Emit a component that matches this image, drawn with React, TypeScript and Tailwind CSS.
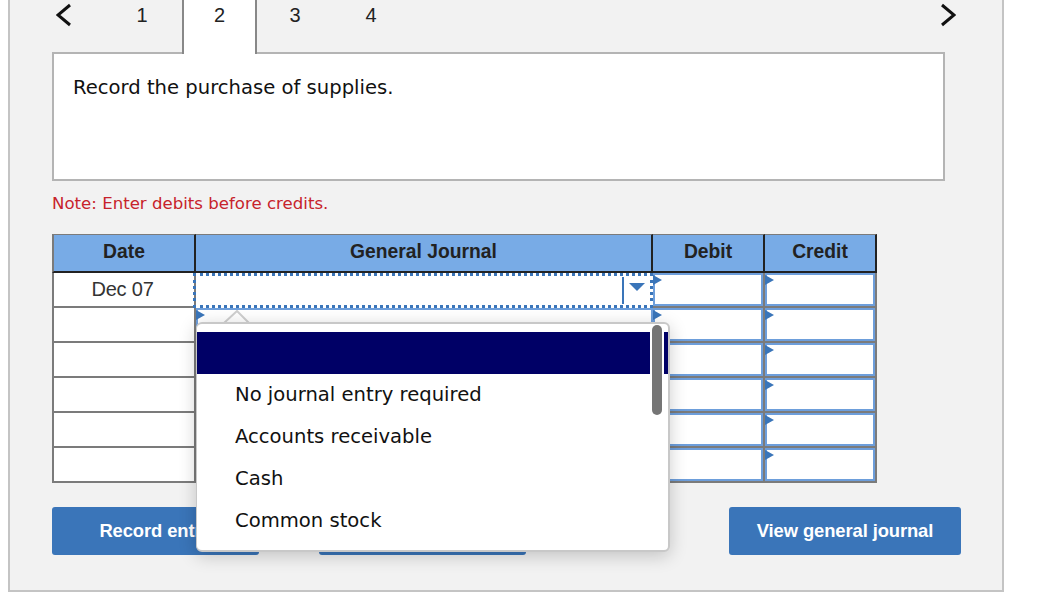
const sans = "font-['Liberation_Sans',Arial,sans-serif]";
const dv = "font-['DejaVu_Sans',Verdana,sans-serif]";

function Chevron({ right = false }: { right?: boolean }) {
  return (
    <svg width="16" height="24" viewBox="0 0 16 24" className="block">
      <polyline
        points={right ? "2,2 14,12 2,22" : "14,2 2,12 14,22"}
        fill="none"
        stroke="#111"
        strokeWidth="3"
      />
    </svg>
  );
}

function Flag() {
  return (
    <svg width="9" height="10" viewBox="0 0 9 10" className="absolute -left-[2px] top-0">
      <polygon points="0,0 9,5 0,10" fill="#3a75b9" />
    </svg>
  );
}

function MoneyCell() {
  return (
    <div className="w-[112px] border-b-2 border-r-2 border-[#7b7b7b]">
      <div className="relative h-full border-2 border-[#6d9edb] bg-white">
        <Flag />
      </div>
    </div>
  );
}

function Row({ date, active }: { date?: string; active?: boolean }) {
  return (
    <div className="flex h-[35px]">
      <div
        className={`flex w-[144px] items-center justify-center border-b-2 border-l-2 border-r-2 border-[#7b7b7b] bg-white pr-[3px] pb-[2px] text-[20px] tracking-[-0.2px] text-[#333] ${sans}`}
      >
        {date}
      </div>
      <div className="relative w-[457px] bg-white">
        {active ? (
          <div className="absolute -left-[3px] top-0 bottom-0 right-0 flex items-center justify-end border-[3px] border-dotted border-[#3a75b9]">
            <div className="mr-[26px] h-[27px] w-[2px] bg-[#3a75b9]" />
            <svg width="16" height="8" viewBox="0 0 16 8" className="absolute right-[5px] top-[7px]">
              <polygon points="0,0 16,0 8,8" fill="#3a75b9" />
            </svg>
          </div>
        ) : (
          <div className="relative h-full border-2 border-[#6d9edb]">
            <Flag />
          </div>
        )}
      </div>
      <MoneyCell />
      <MoneyCell />
    </div>
  );
}

function Th({ w, children }: { w: string; children: string }) {
  return (
    <div
      className={`flex items-center justify-center border-b-2 border-t border-r-2 border-b-[#222] border-r-[#222] border-t-[#7b7b7b] bg-[#78abe6] pb-[1px] text-[19.3px] font-bold text-[#222] ${w} ${sans}`}
    >
      {children}
    </div>
  );
}

function Btn({ w, children }: { w: string; children: string }) {
  return (
    <button className={`h-[48px] rounded-[3px] bg-[#3a75b9] text-[18.4px] font-bold tracking-[-0.1px] text-white ${w} ${sans}`}>
      {children}
    </button>
  );
}

export default function App() {
  const rows = [0, 1, 2, 3, 4, 5];
  const options = ["No journal entry required", "Accounts receivable", "Cash", "Common stock"];
  return (
    <div className="h-[601px] w-[1053px] overflow-hidden bg-white">
      <div className="ml-2 h-[592px] w-[996px] border-x-2 border-b-2 border-[#c4c4c4] bg-[#f2f2f2]">
        <div className={`flex h-[52px] items-stretch pl-[42px] pr-[46px] text-[20px] text-[#222] ${sans}`}>
          <div className="w-[52px] pl-[4px] pt-[3px]">
            <Chevron />
          </div>
          <div className="flex h-[30px] w-[78px] items-center justify-center pr-[2px]">1</div>
          <div className="relative z-10 -mb-[2px] flex w-[75px] justify-center border-x-2 border-[#888] bg-white">
            <span className="leading-[30px]">2</span>
          </div>
          <div className="flex h-[30px] w-[76px] items-center justify-center">3</div>
          <div className="flex h-[30px] w-[76px] items-center justify-center">4</div>
          <div className="ml-auto pt-[3px]">
            <Chevron right />
          </div>
        </div>

        <div className="ml-[42px] h-[129px] w-[893px] border-2 border-[#b4b4b4] bg-white pl-[19px] pt-[20px]">
          <p className={`text-[19.6px] leading-[28px] text-[#111] ${dv}`}>Record the purchase of supplies.</p>
        </div>

        <p className={`ml-[42px] mt-[12px] text-[16.6px] leading-[22px] text-[#c7232b] ${dv}`}>
          Note: Enter debits before credits.
        </p>

        <div className="relative ml-[42px] mt-[19px] w-[825px]">
          <div className="flex h-[39px]">
            <div
              className={`flex w-[144px] items-center justify-center border-l-2 border-l-[#7b7b7b] border-t border-t-[#7b7b7b] border-b-2 border-b-[#222] border-r-2 border-r-[#222] bg-[#78abe6] pb-[1px] text-[19.3px] font-bold text-[#222] ${sans}`}
            >
              Date
            </div>
            <Th w="w-[457px]">General Journal</Th>
            <Th w="w-[112px]">Debit</Th>
            <Th w="w-[112px]">Credit</Th>
          </div>
          {rows.map((r) => (
            <Row key={r} date={r === 0 ? "Dec 07" : undefined} active={r === 0} />
          ))}

          <div className="absolute left-[144px] top-[76px] z-20 w-[474px]">
            <svg width="474" height="14" viewBox="0 0 474 14" className="block">
              <polygon points="28,14 41,1 53,14" fill="#fff" />
              <polyline points="28,13 41,1 53,13" fill="none" stroke="#cfcfcf" strokeWidth="2" />
            </svg>
            <div className="relative -mt-[2px] h-[230px] overflow-hidden rounded-md border-2 border-l border-[#c8c8c8] bg-white pt-[8px] shadow-[0_4px_18px_rgba(0,0,0,0.2)]">
              <div className="h-[42px] bg-[#000066]" />
              {options.map((o) => (
                <div key={o} className={`flex h-[42px] items-center pb-[1px] pl-[38px] text-[19.6px] text-[#111] ${dv}`}>
                  {o}
                </div>
              ))}
              <div className="absolute right-[4px] top-0 h-[92px] w-[14px] bg-white px-[2px] pt-[1px]">
                <div className="h-[90px] w-[10px] rounded-full bg-[#757575]" />
              </div>
            </div>
          </div>
        </div>

        <div className="ml-[42px] mt-[24px] flex">
          <Btn w="w-[207px]">Record entry</Btn>
          <Btn w="ml-[60px] w-[207px]">Clear entry</Btn>
          <Btn w="ml-[203px] w-[232px]">View general journal</Btn>
        </div>
      </div>
    </div>
  );
}
